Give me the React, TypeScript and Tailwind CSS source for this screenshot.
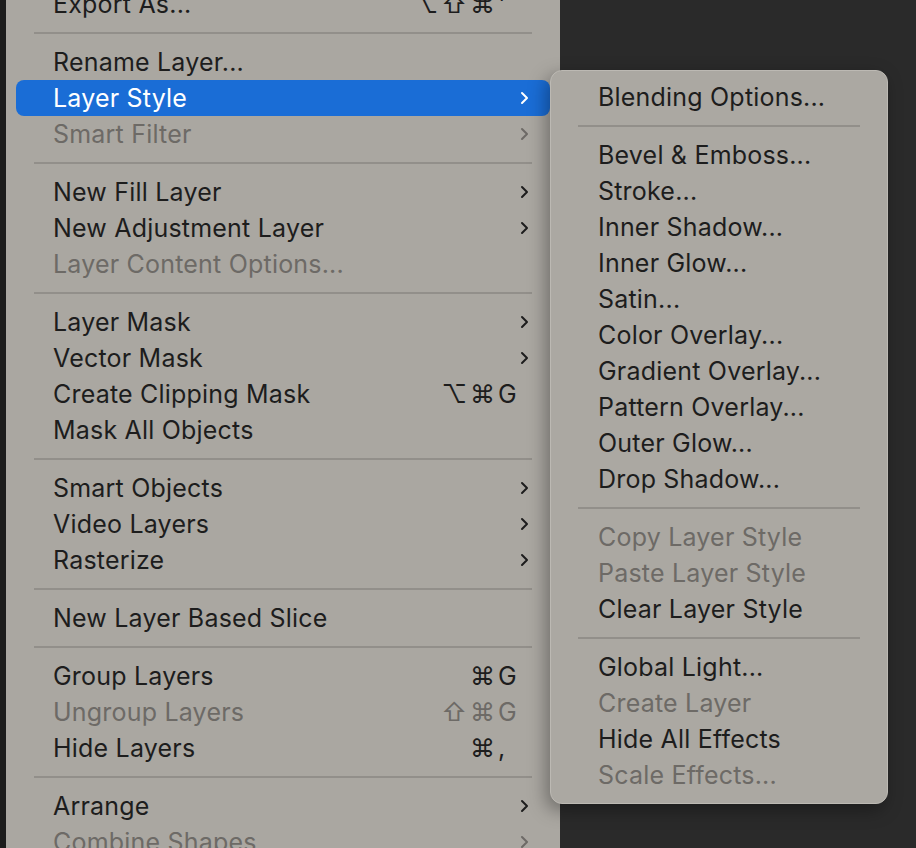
type Item =
  | { sep: true }
  | { label: string; sub?: boolean; off?: boolean; mods?: string; k?: string; active?: boolean };

const mainItems: Item[] = [
  { label: "Export As...", mods: "⌥⇧⌘", k: "'" },
  { sep: true },
  { label: "Rename Layer..." },
  { label: "Layer Style", sub: true, active: true },
  { label: "Smart Filter", sub: true, off: true },
  { sep: true },
  { label: "New Fill Layer", sub: true },
  { label: "New Adjustment Layer", sub: true },
  { label: "Layer Content Options...", off: true },
  { sep: true },
  { label: "Layer Mask", sub: true },
  { label: "Vector Mask", sub: true },
  { label: "Create Clipping Mask", mods: "⌥⌘", k: "G" },
  { label: "Mask All Objects" },
  { sep: true },
  { label: "Smart Objects", sub: true },
  { label: "Video Layers", sub: true },
  { label: "Rasterize", sub: true },
  { sep: true },
  { label: "New Layer Based Slice" },
  { sep: true },
  { label: "Group Layers", mods: "⌘", k: "G" },
  { label: "Ungroup Layers", mods: "⇧⌘", k: "G", off: true },
  { label: "Hide Layers", mods: "⌘", k: "," },
  { sep: true },
  { label: "Arrange", sub: true },
  { label: "Combine Shapes", sub: true, off: true },
];

const styleItems: Item[] = [
  { label: "Blending Options..." },
  { sep: true },
  { label: "Bevel & Emboss..." },
  { label: "Stroke..." },
  { label: "Inner Shadow..." },
  { label: "Inner Glow..." },
  { label: "Satin..." },
  { label: "Color Overlay..." },
  { label: "Gradient Overlay..." },
  { label: "Pattern Overlay..." },
  { label: "Outer Glow..." },
  { label: "Drop Shadow..." },
  { sep: true },
  { label: "Copy Layer Style", off: true },
  { label: "Paste Layer Style", off: true },
  { label: "Clear Layer Style" },
  { sep: true },
  { label: "Global Light..." },
  { label: "Create Layer", off: true },
  { label: "Hide All Effects" },
  { label: "Scale Effects...", off: true },
];

const Chevron = ({ color }: { color: string }) => (
  <svg width="9" height="14" viewBox="0 0 9 14" fill="none">
    <path d="M2 2l5 5-5 5" stroke={color} strokeWidth="2" strokeLinecap="round" strokeLinejoin="round" />
  </svg>
);

const Row = ({ item }: { item: Exclude<Item, { sep: true }> }) => {
  const text = item.active ? "text-white" : item.off ? "text-[#6d6a66]" : "text-[#1d1d1d]";
  return (
    <div
      className={`flex h-[36px] items-center rounded-[8px] pl-[37px] pr-[26px] ${text} ${
        item.active ? "bg-[#1a6dd6]" : ""
      }`}
    >
      <span className="flex-1 whitespace-nowrap">{item.label}</span>
      {item.mods && (
        <span className="mr-[6px] flex items-center">
          <span className="text-right tracking-[3px]">{item.mods}</span>
          <span className="w-[20px] text-left">{item.k}</span>
        </span>
      )}
      {item.sub && (
        <span className="-mr-[5px]">
          <Chevron color={item.active ? "#ffffff" : item.off ? "#6d6a66" : "#1d1d1d"} />
        </span>
      )}
    </div>
  );
};

const Sep = ({ inset }: { inset: string }) => (
  <div className={`flex h-[22px] items-center ${inset}`}>
    <div className="h-[2px] w-full bg-[#928f8a]" />
  </div>
);

export default function App() {
  return (
    <div className="relative flex h-[848px] w-[916px] overflow-hidden bg-[#2a2a2a] font-['Inter','DejaVu_Sans',sans-serif] text-[25px] leading-[36px] tracking-[0.2px]">
      <div className="w-[6px] bg-[#1c1c1c]" />
      <div className="w-[554px] bg-[#aaa7a1] px-[10px]">
        <div className="-mt-[14px]">
          {mainItems.map((it, i) =>
            "sep" in it ? <Sep key={i} inset="ml-[18px] mr-[18px]" /> : <Row key={i} item={it} />
          )}
        </div>
      </div>
      <div className="absolute left-[550px] top-[70px] h-[734px] w-[338px] rounded-[12px] border border-[#bcb9b3] bg-[#aba8a2] px-[10px] pt-[8px] shadow-[-4px_6px_18px_rgba(0,0,0,0.35)]">
        {styleItems.map((it, i) =>
          "sep" in it ? <Sep key={i} inset="ml-[17px] mr-[17px]" /> : <Row key={i} item={it} />
        )}
      </div>
    </div>
  );
}
